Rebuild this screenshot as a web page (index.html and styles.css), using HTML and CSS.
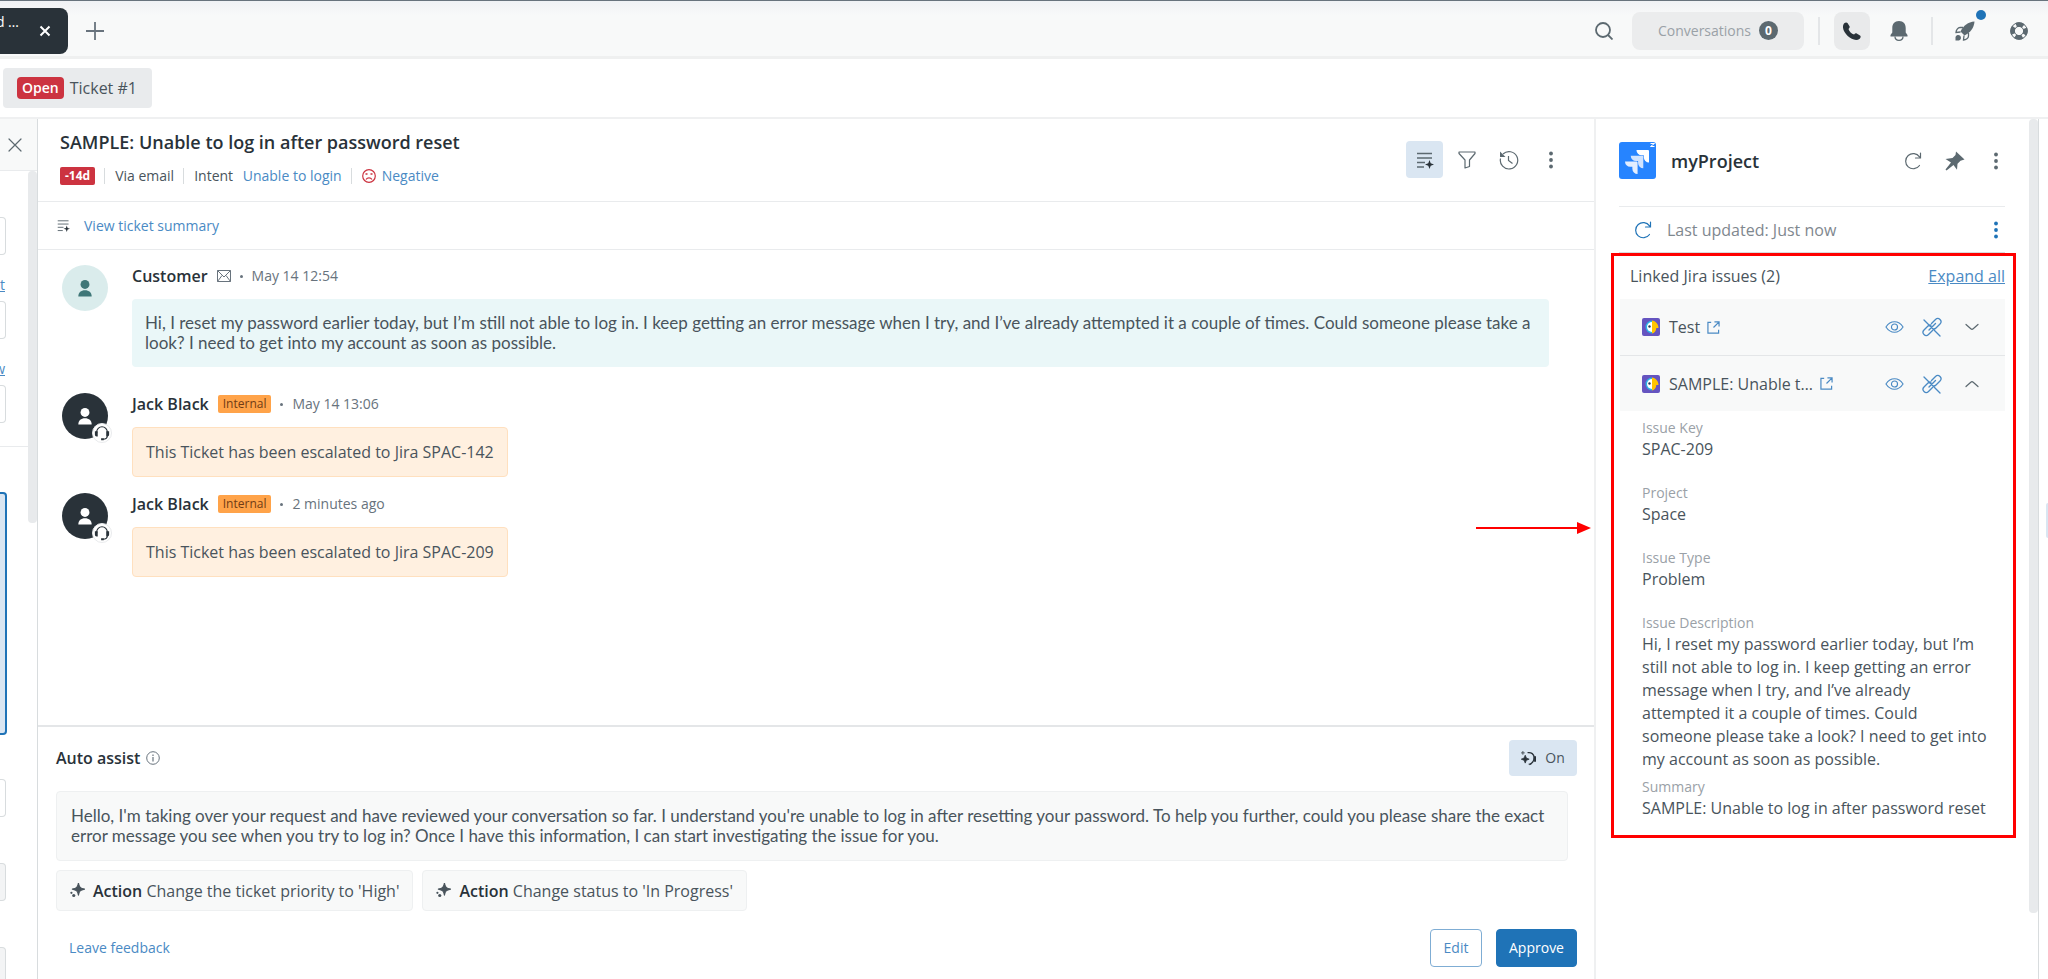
FILE: index.html
```
<!DOCTYPE html>
<html lang="en">

<head>
    <meta charset="UTF-8">
    <title>SAMPLE: Unable to log in after password reset</title>
    <link rel="stylesheet" href="styles.css">
</head>

<body>
    <!-- shared icons -->
    <svg class="sprite" width="0" height="0">
        <symbol id="i-summary" viewBox="0 0 18 18">
            <path d="M1 2.500h15M1 7h15M1 11.500h8M1 16h7" fill="none" stroke="currentColor" stroke-width="1.300" />
            <path d="M13.500 9l1.200 3.300 3.300 1.200-3.300 1.200-1.200 3.300-1.200-3.300-3.300-1.200 3.300-1.200z" fill="#293239" />
        </symbol>
        <symbol id="i-reload" viewBox="0 0 18 18">
            <path d="M15.500 13.500A7.600 7.600 0 1 1 15.500 4.800M16.500 1v5h-5" fill="none" stroke="currentColor" stroke-width="1.200" stroke-linecap="round" />
        </symbol>
        <symbol id="i-dots" viewBox="0 0 18 18">
            <g fill="currentColor">
                <circle cx="9" cy="2.500" r="1.900" />
                <circle cx="9" cy="9" r="1.900" />
                <circle cx="9" cy="15.500" r="1.900" />
            </g>
        </symbol>
        <symbol id="i-user" viewBox="0 0 18 20">
            <circle cx="9" cy="6" r="5" fill="currentColor" />
            <path d="M1.500 19.500c0-4.500 3-7 7.500-7s7.500 2.500 7.500 7z" fill="currentColor" />
        </symbol>
        <symbol id="i-headset" viewBox="0 0 18 18">
            <path d="M3 9V8a6 6 0 0 1 12 0v4c0 3-2 4-5 4" fill="none" stroke="#293239" stroke-width="1.300" />
            <path d="M1 7h3.200v6H3a2 2 0 0 1-2-2zM17 7h-3.200v6H15a2 2 0 0 0 2-2zM8 14.800h3v2.400H8z" fill="#293239" />
        </symbol>
        <symbol id="i-bird" viewBox="0 0 18 18">
            <rect width="18" height="18" rx="2" fill="#6554c0" />
            <path d="M10 2.500a6.500 6.500 0 0 0 0 13z" fill="#2bb3e6" />
            <path d="M10 4a4.800 4.800 0 0 0 0 10z" fill="#fff" />
            <path d="M10 2.500c3.500.5 6.500 3.500 6.500 7.500h-2.200c0 3-2 5.200-4.300 5.500z" fill="#ffc400" />
            <circle cx="7.500" cy="8.500" r="1.200" fill="#253858" />
        </symbol>
        <symbol id="i-external" viewBox="0 0 14 14">
            <path d="M4.500 1.500H1v11.500h11.500V9.500M8 1h5v5M12.800 1.200L7 7" fill="none" stroke="currentColor" stroke-width="1.300" />
        </symbol>
        <symbol id="i-eye" viewBox="0 0 20 14">
            <path d="M1 7c2.500-3.800 5.500-5.500 9-5.500S16.500 3.200 19 7c-2.500 3.800-5.500 5.500-9 5.500S3.500 10.800 1 7z" fill="none" stroke="currentColor" stroke-width="1.200" />
            <circle cx="10" cy="7" r="3.200" fill="none" stroke="currentColor" stroke-width="1.200" />
        </symbol>
        <symbol id="i-unlink" viewBox="0 0 20 20">
            <path d="M2 3l16 16M9.500 6.500L13.500 2.500a3.200 3.200 0 0 1 4.500 0 3.200 3.200 0 0 1 0 4.500l-4 4a3.200 3.200 0 0 1-3 .9M10.500 13.500l-4 4a3.200 3.200 0 0 1-4.500 0 3.200 3.200 0 0 1 0-4.500l4-4a3.200 3.200 0 0 1 3-.9M7 13l6.500-6.500" fill="none" stroke="currentColor" stroke-width="1.300" stroke-linecap="round" />
        </symbol>
        <symbol id="i-down" viewBox="0 0 14 8">
            <path d="M1 1.500l4.800 4.300c.8.700 1.600.7 2.400 0L13 1.500" fill="none" stroke="currentColor" stroke-width="1.200" stroke-linecap="round" />
        </symbol>
        <symbol id="i-up" viewBox="0 0 14 8">
            <path d="M1 6.500l4.800-4.300c.8-.7 1.600-.7 2.400 0L13 6.500" fill="none" stroke="currentColor" stroke-width="1.200" stroke-linecap="round" />
        </symbol>
        <symbol id="i-sparkle" viewBox="0 0 16 16">
            <path d="M9 0c.7 4.500 1.900 5.700 6.500 6.500-4.600.8-5.800 2-6.500 6.500-.7-4.500-1.900-5.700-6.500-6.500C7.100 5.700 8.300 4.500 9 0z" fill="currentColor" stroke="currentColor" stroke-width="1.200" stroke-linejoin="round" />
            <circle cx="1.500" cy="10.500" r="1.200" fill="currentColor" />
            <circle cx="4" cy="13.300" r="1.700" fill="currentColor" />
        </symbol>
        <symbol id="i-close" viewBox="0 0 14 14">
            <path d="M1 1l12 12M13 1L1 13" fill="none" stroke="currentColor" stroke-width="1.200" stroke-linecap="round" />
        </symbol>
    </svg>

    <div class="app">
        <header class="topbar">
            <div class="tab">
                <span class="tab-title">d …</span>
                <button class="tab-close" aria-label="Close tab"><svg width="12" height="12" viewBox="0 0 12 12"><path d="M1.500 1.500l9 9M10.500 1.500l-9 9" stroke="#fff" stroke-width="2" /></svg></button>
            </div>
            <button class="add" aria-label="Add"><svg width="18" height="18" viewBox="0 0 18 18"><path d="M9 0v18M0 9h18" stroke="#68737d" stroke-width="1.800" /></svg></button>
            <nav class="tools">
                <button aria-label="Search"><svg width="18" height="18" viewBox="0 0 18 18" fill="none" stroke="#5c6970" stroke-width="1.800"><circle cx="8" cy="8" r="7" /><path d="M13 13l4.500 4.500" /></svg></button>
                <button class="conversations">Conversations <span class="count">0</span></button>
                <span class="sep"></span>
                <button class="phone" aria-label="Phone"><svg width="18" height="18" viewBox="0 0 18 18"><path d="M1 1.500C2 .3 3.800 0 4.500 1l2 3.300c.5.900 0 1.900-1 2.600.7 2.500 3 4.900 5.600 5.600.8-1 1.700-1.500 2.600-1l3.300 2c1 .7.800 2.200-.3 3.200C10 22-4 8.500 1 1.500z" fill="#293239" /></svg></button>
                <button aria-label="Notifications"><svg width="18" height="20" viewBox="0 0 18 20"><path d="M9 0C4.500 0 2.300 3 2.300 7v4.500L.5 14v1.500h17V14l-1.800-2.500V7C15.700 3 13.500 0 9 0z" fill="#5c6970" /><path d="M5 15.500c0 2.500 1.500 3.800 4 3.800s4-1.300 4-3.800" fill="none" stroke="#5c6970" stroke-width="1.300" /></svg></button>
                <span class="sep"></span>
                <button class="rocket" aria-label="What's new"><svg width="20" height="20" viewBox="0 0 20 20"><path d="M19.500.5C13 1 8.500 4.500 5.500 10.500l4 4C15.500 11.500 19 7 19.500.5z" fill="#5c6970" /><path d="M8 6.500H5c-2 0-4 2.500-4 5l4.500-.5M13.500 12v3c0 2-2.500 4-5 4l.5-4.500" fill="none" stroke="#5c6970" stroke-width="1.300" /><path d="M.5 19.500V16A2.800 2.800 0 1 1 4 19.500z" fill="#5c6970" /></svg><span class="new-dot"></span></button>
                <button aria-label="Help"><svg width="18" height="18" viewBox="0 0 18 18" fill="none" stroke="#5c6970"><circle cx="9" cy="9" r="6.500" stroke-width="4.400" stroke-dasharray="7.400 2.810" stroke-dashoffset="3.700" /><circle cx="9" cy="9" r="8.300" stroke-width="1" /><circle cx="9" cy="9" r="4.600" stroke-width="1" /></svg></button>
            </nav>
        </header>

        <div class="crumbs">
            <button class="ticket"><span class="open">Open</span> Ticket #1</button>
        </div>

        <div class="workspace">
            <aside class="props">
                <div class="props-head"><button aria-label="Close panel"><svg width="14" height="14"><use href="#i-close" /></svg></button></div>
                <div class="props-body">
                    <div class="fields">
                        <input class="f1" type="text" aria-label="Assignee">
                        <a href="#">t</a>
                        <input type="text" aria-label="Followers">
                        <a href="#">w</a>
                        <input type="text" aria-label="Tags">
                        <div class="line"></div>
                        <div class="selected"></div>
                        <input class="f4" type="text" aria-label="Type">
                        <input class="f5" type="text" aria-label="Priority" disabled>
                        <input class="f5" type="text" aria-label="Group" disabled>
                    </div>
                    <div class="thumb"></div>
                </div>
            </aside>

            <main class="conversation">
                <div class="head">
                    <div>
                        <h1>SAMPLE: Unable to log in after password reset</h1>
                        <div class="meta">
                            <span class="sla">-14d</span>
                            <span class="item">Via email</span>
                            <span class="item">Intent <a href="#">Unable to login</a></span>
                            <span class="item mood"><svg width="14" height="14" viewBox="0 0 14 14" fill="none" stroke="#cc3340"><circle cx="7" cy="7" r="6.300" stroke-width="1.200" /><path d="M4 10.500c1.500-2.300 4.500-2.300 6 0M3.500 5h2M8.500 5h2" stroke-width="1.300" /></svg><a href="#">Negative</a></span>
                        </div>
                    </div>
                    <div class="actions">
                        <button class="active" aria-label="Summary"><svg width="18" height="18"><use href="#i-summary" /></svg></button>
                        <button aria-label="Filter"><svg width="18" height="18" viewBox="0 0 18 18"><path d="M1 1h16v1.500L11.500 9v6.500L7 17V9L1 2.500z" fill="none" stroke="currentColor" stroke-width="1.200" stroke-linejoin="round" /></svg></button>
                        <button aria-label="History"><svg width="20" height="20" viewBox="0 0 20 20" fill="none" stroke="currentColor"><path d="M1.500 8.500A8.700 8.700 0 1 0 4 4M9.500 6v4.500l4 3" stroke-width="1.200" /><path d="M1 1.500v5.500h5.500z" fill="currentColor" stroke="none" /></svg></button>
                        <button aria-label="More"><svg width="18" height="18"><use href="#i-dots" /></svg></button>
                    </div>
                </div>

                <div class="summary">
                    <svg width="13" height="13"><use href="#i-summary" /></svg>
                    <a href="#">View ticket summary</a>
                </div>

                <div class="log">
                    <article class="message">
                        <div class="avatar customer"><svg width="16" height="18"><use href="#i-user" /></svg></div>
                        <div class="content">
                            <div class="who"><b>Customer</b> <svg width="14" height="12" viewBox="0 0 14 12" fill="none" stroke="#68737d"><path d="M.5.500h13v11H.5zM.5.500L7 7 13.500.500M.5 11.500l4.500-6M13.500 11.500L9 5.500" /></svg> <i></i> <time>May 14 12:54</time></div>
                            <p class="bubble reply">Hi, I reset my password earlier today, but I’m still not able to log in. I keep getting an error message when I try, and I’ve already attempted it a couple of times. Could someone please take a look? I need to get into my account as soon as possible.</p>
                        </div>
                    </article>
                    <article class="message">
                        <div class="avatar agent"><svg width="16" height="18"><use href="#i-user" /></svg><span class="badge"><svg width="16" height="16"><use href="#i-headset" /></svg></span></div>
                        <div class="content">
                            <div class="who"><b>Jack Black</b> <span class="internal">Internal</span> <i></i> <time>May 14 13:06</time></div>
                            <p class="bubble note">This Ticket has been escalated to Jira SPAC-142</p>
                        </div>
                    </article>
                    <article class="message">
                        <div class="avatar agent"><svg width="16" height="18"><use href="#i-user" /></svg><span class="badge"><svg width="16" height="16"><use href="#i-headset" /></svg></span></div>
                        <div class="content">
                            <div class="who"><b>Jack Black</b> <span class="internal">Internal</span> <i></i> <time>2 minutes ago</time></div>
                            <p class="bubble note">This Ticket has been escalated to Jira SPAC-209</p>
                        </div>
                    </article>
                    <svg class="arrow" width="116" height="12" viewBox="0 0 116 12"><path d="M0 6h102" stroke="#f00" stroke-width="2" /><path d="M101 0l14 6-14 6z" fill="#f00" /></svg>
                </div>

                <section class="assist">
                    <div class="assist-head">
                        <h2>Auto assist <svg width="14" height="14" viewBox="0 0 14 14" fill="none" stroke="#68737d"><circle cx="7" cy="7" r="6.300" /><path d="M7 6v4.500M7 3.500V5" stroke-width="1.200" /></svg></h2>
                        <button class="toggle"><svg width="15" height="15" viewBox="0 0 16 16" fill="none" stroke="#293239" stroke-width="1.400"><path d="M7 1.800c4-.8 7 1.700 7 5.200s-2 6-5 7.500" /><path d="M4.500 4.500l1.200 3 3 1.200-3 1.200-1.200 3-1.200-3-3-1.200 3-1.200zM14 6h2v5h-2zM2 0v4M0 2h4M8 14h3" fill="#293239" stroke-width=".8" /></svg>On</button>
                    </div>
                    <p class="suggestion">Hello, I'm taking over your request and have reviewed your conversation so far. I understand you're unable to log in after resetting your password. To help you further, could you please share the exact error message you see when you try to log in? Once I have this information, I can start investigating the issue for you.</p>
                    <div class="steps">
                        <button><svg width="15" height="15"><use href="#i-sparkle" /></svg><span><b>Action</b> Change the ticket priority to 'High'</span></button>
                        <button><svg width="15" height="15"><use href="#i-sparkle" /></svg><span><b>Action</b> Change status to 'In Progress'</span></button>
                    </div>
                    <div class="assist-foot">
                        <a href="#">Leave feedback</a>
                        <button class="edit">Edit</button>
                        <button class="approve">Approve</button>
                    </div>
                </section>
            </main>

            <aside class="apps">
                <div class="apps-body">
                    <div class="app-head">
                        <svg width="37" height="37" viewBox="0 0 37 37">
                            <rect width="37" height="37" rx="3" fill="#2684ff" />
                            <g transform="translate(6 8)">
                                <path d="M11.571 11.513H0a5.218 5.218 0 0 0 5.232 5.215h2.130v2.057A5.215 5.215 0 0 0 12.575 24V12.518a1.005 1.005 0 0 0-1.005-1.005z" fill="#e3eeff" />
                                <path d="M17.294 5.757H5.736a5.215 5.215 0 0 0 5.215 5.214h2.129v2.058a5.218 5.218 0 0 0 5.215 5.214V6.758a1.001 1.001 0 0 0-1.001-1.001z" fill="#d0e3ff" />
                                <path d="M23.013 0H11.455a5.215 5.215 0 0 0 5.215 5.215h2.129v2.057A5.215 5.215 0 0 0 24 12.483V1.005A1.001 1.001 0 0 0 23.013 0z" fill="#fff" />
                            </g>
                            <path d="M31.500 1.500h4l-4 3h4" fill="none" stroke="#fff" />
                        </svg>
                        <h2>myProject</h2>
                        <button aria-label="Reload"><svg width="18" height="18"><use href="#i-reload" /></svg></button>
                        <button aria-label="Pin"><svg width="20" height="20" viewBox="0 0 20 20"><path d="M11 .5l8.500 8-4 1.200-3 3-.5 6L8.500 14 1.500 19.500l-1-1L6 11.500.5 8l7-1L10.500 4z" fill="#5c6970" /></svg></button>
                        <button aria-label="More"><svg width="18" height="18"><use href="#i-dots" /></svg></button>
                    </div>
                    <div class="updated">
                        <svg width="18" height="18"><use href="#i-reload" /></svg>
                        <span>Last updated: Just now</span>
                        <button aria-label="Options"><svg width="18" height="18"><use href="#i-dots" /></svg></button>
                    </div>
                    <section class="issues">
                        <div class="issues-head"><span>Linked Jira issues (2)</span><a href="#">Expand all</a></div>
                        <div class="issue">
                            <svg width="18" height="18"><use href="#i-bird" /></svg>
                            <span class="name">Test</span>
                            <a href="#" aria-label="Open issue"><svg width="13" height="13"><use href="#i-external" /></svg></a>
                            <div class="issue-tools">
                                <button aria-label="View"><svg width="19" height="14"><use href="#i-eye" /></svg></button>
                                <button aria-label="Unlink"><svg width="20" height="20"><use href="#i-unlink" /></svg></button>
                                <button class="fold" aria-label="Expand"><svg width="14" height="8"><use href="#i-down" /></svg></button>
                            </div>
                        </div>
                        <div class="issue">
                            <svg width="18" height="18"><use href="#i-bird" /></svg>
                            <span class="name">SAMPLE: Unable t…</span>
                            <a href="#" aria-label="Open issue"><svg width="13" height="13"><use href="#i-external" /></svg></a>
                            <div class="issue-tools">
                                <button aria-label="View"><svg width="19" height="14"><use href="#i-eye" /></svg></button>
                                <button aria-label="Unlink"><svg width="20" height="20"><use href="#i-unlink" /></svg></button>
                                <button class="fold" aria-label="Collapse"><svg width="14" height="8"><use href="#i-up" /></svg></button>
                            </div>
                        </div>
                        <dl>
                            <dt>Issue Key</dt>
                            <dd>SPAC-209</dd>
                            <dt>Project</dt>
                            <dd>Space</dd>
                            <dt>Issue Type</dt>
                            <dd>Problem</dd>
                            <dt>Issue Description</dt>
                            <dd class="long">Hi, I reset my password earlier today, but I’m still not able to log in. I keep getting an error message when I try, and I’ve already attempted it a couple of times. Could someone please take a look? I need to get into my account as soon as possible.</dd>
                            <dt>Summary</dt>
                            <dd class="long">SAMPLE: Unable to log in after password reset</dd>
                        </dl>
                    </section>
                </div>
                <div class="thumb"></div>
            </aside>
            <div class="rail"><span></span></div>
        </div>
    </div>
</body>

</html>
```
FILE: styles.css
```
* {
    box-sizing: border-box;
}

body {
    margin: 0;
    background: #fff;
    color: #49545c;
    font: 16px/20px "Open Sans", "Noto Sans", sans-serif;
}

h1, h2, p, dl, dd {
    margin: 0;
}

button {
    display: flex;
    align-items: center;
    justify-content: center;
    padding: 0;
    border: 0;
    background: none;
    color: #5c6970;
    font: inherit;
}

a {
    color: #4a8ac4;
    text-decoration: none;
}

b, h1, h2 {
    color: #293239;
    font-size: 16px;
    font-weight: 600;
}

svg {
    flex: none;
}

.sprite {
    position: absolute;
}

.app {
    display: flex;
    flex-direction: column;
    height: 100vh;
    overflow: hidden;
    border-top: 1px solid #68737d;
}

/* top bar */
.topbar {
    flex: none;
    display: flex;
    align-items: center;
    height: 58px;
    padding-right: 20px;
    background: linear-gradient(#f0f2f5, #f8f9f9 14px);
    border-bottom: 3px solid #eff0f0;
}

.tab {
    display: flex;
    align-items: center;
    justify-content: flex-end;
    width: 68px;
    height: 46px;
    margin-top: 4px;
    padding-right: 17px;
    border-radius: 0 8px 8px 0;
    background: #293239;
    color: #fff;
}

.tab-title {
    align-self: flex-start;
    margin-right: 20px;
    padding-top: 4px;
    font-size: 14px;
    white-space: nowrap;
}

.add {
    margin: 4px 0 0 18px;
}

.tools {
    display: flex;
    align-items: center;
    height: 38px;
    margin: 4px 0 0 auto;
}

.conversations {
    width: 172px;
    height: 38px;
    margin-left: 19px;
    gap: 8px;
    border-radius: 8px;
    background: #ebeced;
    color: #9aa1a7;
    font-size: 14px;
}

.count {
    width: 19px;
    height: 19px;
    border-radius: 50%;
    background: #5c6970;
    color: #fff;
    font-size: 12px;
    font-weight: 700;
    line-height: 19px;
}

.sep {
    width: 2px;
    height: 28px;
    margin: 0 14px;
    background: #e4e6e8;
}

.phone {
    width: 36px;
    height: 38px;
    margin-right: 20px;
    border-radius: 8px;
    background: #e9eaeb;
}

.tools .sep ~ .sep {
    margin: 0 22px 0 23px;
}

.rocket {
    position: relative;
    margin-right: 35px;
}

.new-dot {
    position: absolute;
    top: -11px;
    right: -11px;
    width: 10px;
    height: 10px;
    border-radius: 50%;
    background: #1f73b7;
}

/* ticket tabs */
.crumbs {
    flex: none;
    height: 60px;
    padding: 9px 3px;
    border-bottom: 2px solid #eff0f1;
}

.ticket {
    gap: 6px;
    height: 40px;
    padding: 0 15px 0 14px;
    border-radius: 4px;
    background: #e9ebed;
    color: #49545c;
}

.open {
    height: 22px;
    padding: 0 5px;
    border-radius: 4px;
    background: #cc3340;
    color: #fff;
    font-size: 14px;
    font-weight: 600;
    line-height: 22px;
}

.workspace {
    flex: 1;
    display: flex;
    min-height: 0;
}

/* ticket fields, scrolled out to the left */
.props {
    flex: none;
    width: 38px;
    border-right: 1px solid #d8dcde;
}

.props-head {
    height: 52px;
    padding: 19px 0 0 8px;
    border-bottom: 1px solid #e9ebed;
    background: #f8f9f9;
}

.props-body {
    display: flex;
    justify-content: space-between;
}

.fields {
    flex: 1;
    display: flex;
    flex-direction: column;
}

.fields input {
    width: 6px;
    height: 38px;
    padding: 0;
    border: 1px solid #d8dcde;
    border-left: 0;
    border-radius: 0 4px 4px 0;
}

.fields input:disabled {
    background: #f3f4f5;
}

.fields a {
    display: flex;
    justify-content: flex-end;
    width: 5px;
    margin: 20px 0 6px;
    font-size: 14px;
    text-decoration: underline;
}

.fields .f1 {
    margin-top: 46px;
}

.fields .f4 {
    margin-top: 44px;
}

.fields .f5 {
    margin-top: 46px;
}

.line {
    height: 1px;
    margin: 23px 0 45px;
    background: #e9ebed;
}

.selected {
    width: 7px;
    height: 243px;
    border: 2px solid #1f73b7;
    border-left: 0;
    border-radius: 0 4px 4px 0;
    background: #dae6f2;
}

.thumb {
    flex: none;
    width: 9px;
    height: 352px;
    border-radius: 4px;
    background: #e8eaec;
}

/* conversation */
.conversation {
    flex: 1;
    display: flex;
    flex-direction: column;
    min-width: 0;
    border-right: 2px solid #eff0f1;
}

.head {
    flex: none;
    display: flex;
    justify-content: space-between;
    height: 83px;
    padding: 11px 25px 0 22px;
    border-bottom: 1px solid #e9ebed;
}

h1 {
    font-size: 18px;
    line-height: 24px;
}

.meta {
    display: flex;
    align-items: center;
    margin-top: 13px;
    font-size: 14px;
    line-height: 16px;
}

.sla {
    padding: 0 5px;
    margin-right: 9px;
    border-radius: 2px;
    background: #cc3340;
    color: #fff;
    font-size: 12px;
    font-weight: 700;
    line-height: 18px;
}

.item {
    margin-right: 9px;
    padding-left: 10px;
    border-left: 1px solid #d8dcde;
}

.item a {
    margin-left: 6px;
}

.mood {
    display: flex;
    align-items: center;
}

.actions {
    display: flex;
    gap: 5px;
    padding-top: 11px;
}

.actions button {
    width: 37px;
    height: 37px;
    border-radius: 4px;
}

.actions .active {
    background: #dae6f2;
}

.summary {
    flex: none;
    display: flex;
    align-items: center;
    gap: 14px;
    height: 48px;
    padding-left: 19px;
    border-bottom: 1px solid #e9ebed;
    color: #5c6970;
    font-size: 14px;
}

.log {
    flex: 1;
    position: relative;
    min-height: 0;
    padding: 15px 45px 0 24px;
}

.message {
    display: flex;
    gap: 24px;
    margin-bottom: 26px;
}

.message + .message {
    margin-bottom: 16px;
}

.avatar {
    position: relative;
    display: flex;
    align-items: center;
    justify-content: center;
    flex: none;
    width: 46px;
    height: 46px;
    border-radius: 50%;
}

.customer {
    background: #daecec;
    color: #3f7778;
}

.agent {
    background: #293239;
    color: #fff;
}

.badge {
    position: absolute;
    right: -4px;
    bottom: -4px;
    display: flex;
    align-items: center;
    justify-content: center;
    width: 20px;
    height: 20px;
    border: 1px solid #e9ebed;
    border-radius: 50%;
    background: #fff;
}

.content {
    flex: 1;
    min-width: 0;
}

.who {
    display: flex;
    align-items: center;
    gap: 9px;
    height: 22px;
}

.who i {
    width: 3px;
    height: 3px;
    border-radius: 50%;
    background: #68737d;
}

.who time {
    color: #68737d;
    font-size: 14px;
    font-weight: 500;
}

.internal {
    height: 18px;
    padding: 0 5px;
    border-radius: 2px;
    background: #ffa349;
    color: #703b15;
    font-size: 12px;
    font-weight: 500;
    line-height: 18px;
}

.bubble {
    width: fit-content;
    margin-top: 12px;
    border-radius: 4px;
}

.reply,
.suggestion {
    font-family: Lato, "Open Sans", sans-serif;
    font-size: 17px;
}

.reply {
    padding: 14px 13px;
    background: #eaf7f8;
}

.note {
    padding: 14px 13px;
    border: 1px solid #ffe0bf;
    background: #fff0e0;
}

.arrow {
    position: absolute;
    right: 2px;
    bottom: 191px;
}

/* auto assist */
.assist {
    flex: none;
    padding: 13px 17px 12px 18px;
    border-top: 2px solid #e4e6e8;
}

.assist-head {
    display: flex;
    align-items: center;
    justify-content: space-between;
}

.assist h2 {
    display: flex;
    align-items: center;
    gap: 6px;
}

.toggle {
    gap: 9px;
    width: 68px;
    height: 36px;
    border-radius: 4px;
    background: #dae6f2;
    color: #49545c;
    font-size: 14px;
}

.suggestion {
    margin: 15px 9px 9px 0;
    padding: 14px;
    border: 1px solid #eef0f1;
    border-radius: 4px;
    background: #f8f9f9;
}

.steps {
    display: flex;
    gap: 9px;
}

.steps button {
    gap: 8px;
    height: 41px;
    padding: 0 13px;
    border: 1px solid #eef0f1;
    border-radius: 4px;
    background: #f8f9f9;
    color: #49545c;
}

.assist-foot {
    display: flex;
    align-items: center;
    gap: 14px;
    margin-top: 18px;
    font-size: 14px;
}

.assist-foot a {
    margin: 0 auto 0 13px;
}

.assist-foot button {
    height: 38px;
    border: 1px solid #7fadd4;
    border-radius: 4px;
}

.edit {
    width: 52px;
    color: #4a8ac4;
}

.assist-foot .approve {
    width: 81px;
    border-color: #1f73b7;
    background: #1f73b7;
    color: #fff;
}

/* jira app */
.apps {
    flex: none;
    display: flex;
    width: 443px;
    border-right: 1px solid #d8dcde;
}

.apps-body {
    flex: 1;
    padding: 0 24px 0 23px;
}

.apps .thumb {
    height: 794px;
}

.app-head {
    display: flex;
    align-items: center;
    height: 88px;
    gap: 15px;
    padding-bottom: 4px;
    border-bottom: 1px solid #e9ebed;
}

.app-head h2 {
    margin-right: auto;
    font-size: 18px;
}

.app-head button {
    width: 27px;
}

.app-head button:last-child,
.updated button {
    width: 18px;
}

.app-head button:last-child {
    margin-left: 4px;
}

.updated {
    display: flex;
    align-items: center;
    gap: 15px;
    height: 46px;
    padding-left: 15px;
    border-bottom: 1px solid #d8dcde;
    color: #7f888f;
}

.updated svg,
.updated button {
    color: #1f73b7;
}

.updated button {
    margin-left: auto;
}

.issues {
    margin: 0 -11px 0 -8px;
    padding: 0 8px 0 6px;
    border: 3px solid #f00;
}

.issues-head {
    display: flex;
    align-items: center;
    justify-content: space-between;
    height: 43px;
    padding: 0 0 4px 10px;
}

.issues-head a {
    text-decoration: underline;
}

.issue {
    display: flex;
    align-items: center;
    height: 56px;
    padding: 0 26px 0 22px;
    background: #f8f9f9;
}

.issue + .issue {
    border-top: 1px solid #e4e6e8;
}

.name {
    margin: 0 7px 0 9px;
    white-space: nowrap;
}

.issue a,
.issue-tools button {
    display: flex;
    color: #4a8ac4;
}

.issue-tools {
    display: flex;
    align-items: center;
    gap: 18px;
    margin-left: auto;
}

.issue-tools .fold {
    margin-left: 5px;
    color: #5c6970;
}

dl {
    padding: 7px 14px 9px 22px;
}

dt {
    color: #9aa1a7;
    font-size: 14px;
    line-height: 20px;
}

dd {
    margin-bottom: 22px;
    line-height: 23px;
}

.long {
    margin-bottom: 6px;
}

.rail {
    flex: 1 0 8px;
    max-width: 9px;
    padding-top: 384px;
}

.rail span {
    display: block;
    height: 35px;
    margin-left: 7px;
    border-radius: 4px 0 0 4px;
    background: #dae6f2;
}
```
